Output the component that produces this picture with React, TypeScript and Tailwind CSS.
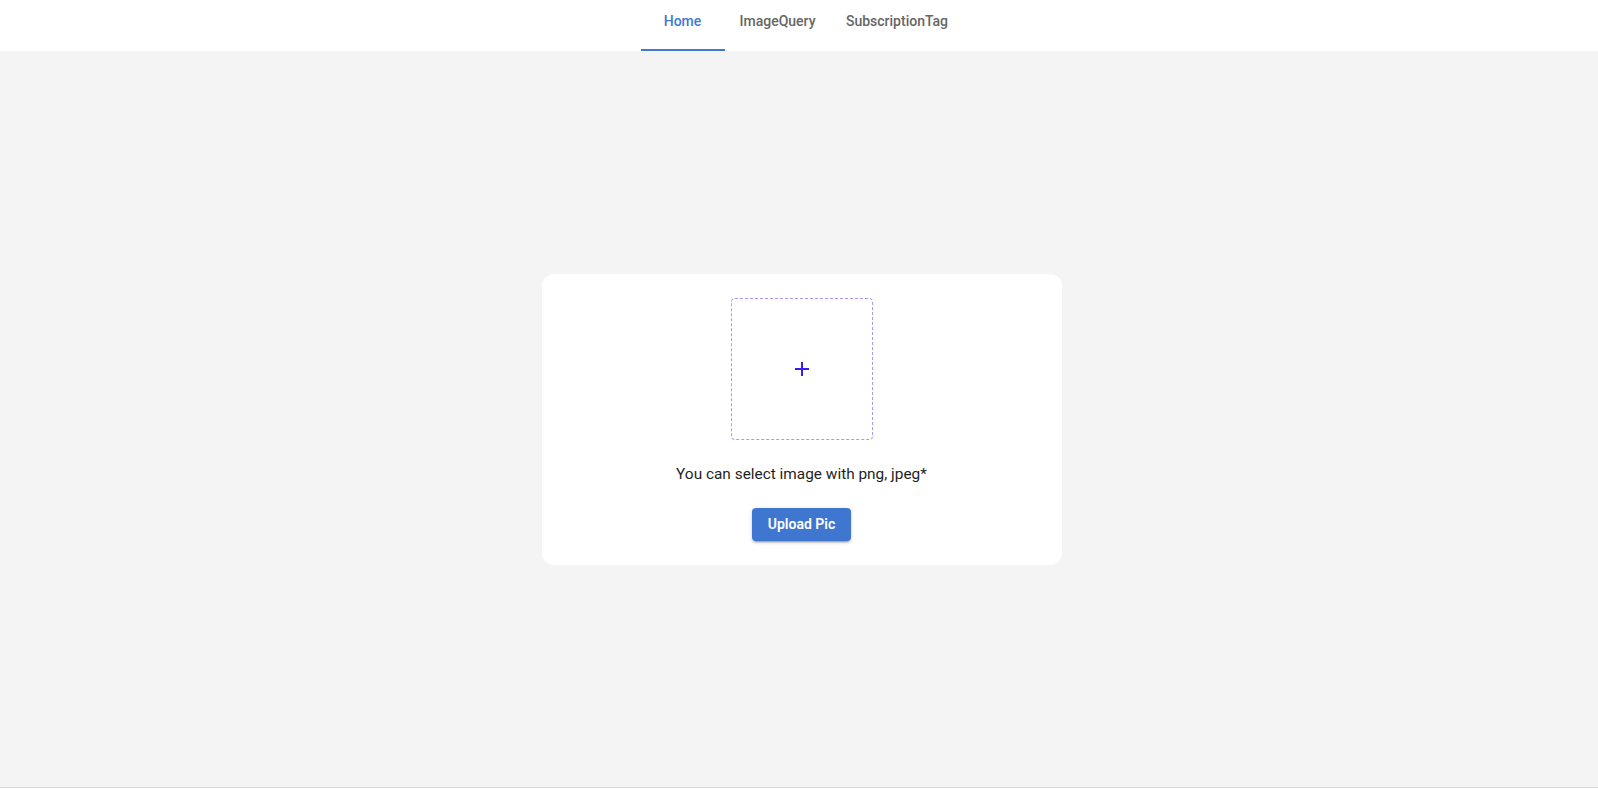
import { useState } from "react";

const tabs = [
  { label: "Home", width: "w-[84px]" },
  { label: "ImageQuery", width: "w-[106px]" },
  { label: "SubscriptionTag", width: "w-[133px]" },
];

export default function App() {
  const [active, setActive] = useState(0);

  return (
    <div className="flex h-[788px] flex-col bg-[#f4f4f4] font-['Roboto',sans-serif] border-b border-[#dadada]">
      {/* Barra de abas */}
      <header className="flex h-[51px] shrink-0 justify-center bg-white pl-[6px]">
        <nav className="flex">
          {tabs.map((tab, i) => (
            <button
              key={tab.label}
              onClick={() => setActive(i)}
              className={
                "relative flex h-full items-start justify-center pt-[11px] text-[14px] font-medium " +
                tab.width +
                (active === i ? " text-[#4178d2]" : " text-[#666666]")
              }
            >
              {tab.label}
              {active === i && (
                <span className="absolute bottom-0 left-0 h-[2px] w-full bg-[#4178d2]" />
              )}
            </button>
          ))}
        </nav>
      </header>

      <main className="flex flex-1 items-center justify-center pl-[5px]">
        <div className="flex w-[520px] flex-col items-center rounded-[12px] bg-white px-6 py-6">
          <label className="flex h-[142px] w-[142px] cursor-pointer items-center justify-center rounded-[4px] border border-dashed border-[#a699f6]">
            <input type="file" accept="image/png, image/jpeg" className="hidden" />
            <svg width="14" height="14" viewBox="0 0 14 14" shapeRendering="crispEdges">
              <rect x="6" y="0" width="2" height="14" fill="#3d1af2" />
              <rect x="0" y="6" width="14" height="2" fill="#3d1af2" />
            </svg>
          </label>
          <p className="mt-[22px] text-[15.4px] leading-6 text-[#1f1f1f]">
            You can select image with png, jpeg*
          </p>
          <button className="mt-[22px] h-[33px] rounded-[4px] bg-[#3f76d0] px-4 text-[14px] font-semibold text-white shadow-[0_3px_1px_-2px_rgba(0,0,0,0.2),0_2px_2px_0_rgba(0,0,0,0.14),0_1px_5px_0_rgba(0,0,0,0.12)]">
            Upload Pic
          </button>
        </div>
      </main>
    </div>
  );
}
